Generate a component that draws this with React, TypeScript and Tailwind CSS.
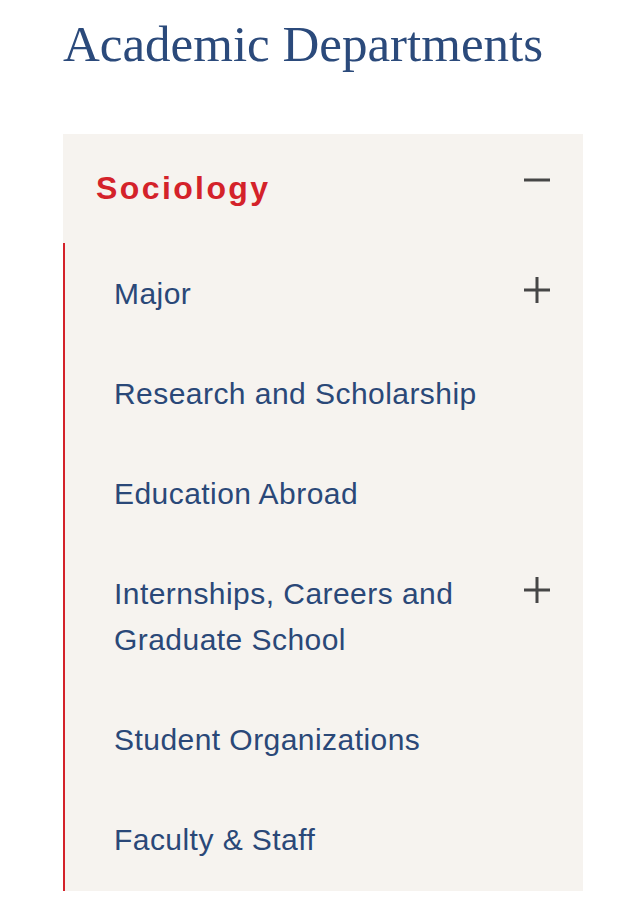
import { useState } from "react";

type Item = { label: string; children?: boolean };

const ITEMS: Item[] = [
  { label: "Major", children: true },
  { label: "Research and Scholarship" },
  { label: "Education Abroad" },
  { label: "Internships, Careers and Graduate School", children: true },
  { label: "Student Organizations" },
  { label: "Faculty & Staff" },
];

function Plus() {
  return (
    <svg width="26" height="26" viewBox="0 0 26 26" className="shrink-0">
      <path d="M0 13h26M13 0v26" stroke="#464646" strokeWidth="3" />
    </svg>
  );
}

function Minus() {
  return (
    <svg width="26" height="26" viewBox="0 0 26 26" className="shrink-0">
      <path d="M0 13h26" stroke="#464646" strokeWidth="3" />
    </svg>
  );
}

export default function App() {
  const [open, setOpen] = useState(true);

  return (
    <div className="min-h-screen bg-white pl-[63px] pt-[14px] font-['Liberation_Sans',Arial,sans-serif]">
      <h1 className="font-['Liberation_Serif','Times_New_Roman',serif] text-[51px] leading-[60px] text-[#2b4a7b]">
        Academic Departments
      </h1>

      <nav className="mt-[60px] w-[520px] bg-[#f6f3ef]">
        <button
          onClick={() => setOpen(!open)}
          className="flex w-full items-start justify-between pl-[33px] pr-[33px] pt-[32px] pb-[32px] text-left"
        >
          <span className="text-[32px] leading-[45px] font-bold tracking-[0.075em] text-[#d4222a]">
            Sociology
          </span>
          <span className="mt-[1px]">{open ? <Minus /> : <Plus />}</span>
        </button>

        {open && (
          <ul className="border-l-2 border-[#d4222a] pb-[2px]">
            {ITEMS.map((item) => (
              <li
                key={item.label}
                className="flex items-start justify-between gap-6 pl-[49px] pr-[33px] pt-[28px] pb-[26px]"
              >
                <a
                  href="#"
                  className="max-w-[390px] text-[30px] leading-[46px] tracking-[0.015em] text-[#2a4878]"
                >
                  {item.label}
                </a>
                {item.children && (
                  <span className="mt-[6px]">
                    <Plus />
                  </span>
                )}
              </li>
            ))}
          </ul>
        )}
      </nav>
    </div>
  );
}
